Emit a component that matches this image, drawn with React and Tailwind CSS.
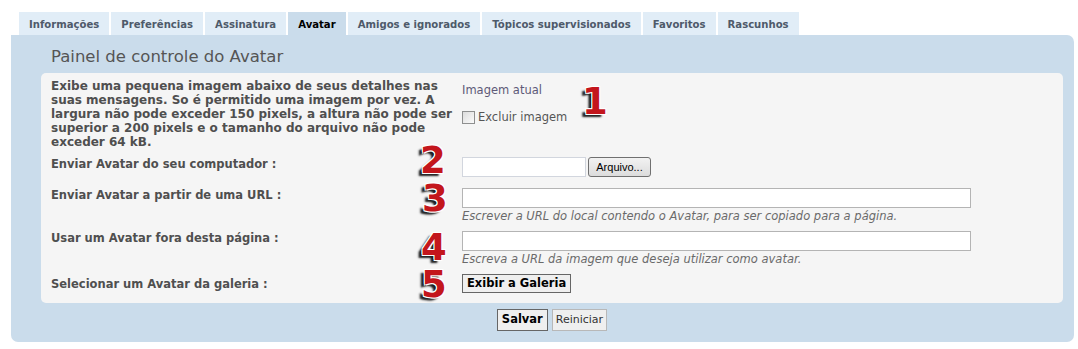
import React from 'react';

const tabs = [
  'Informações',
  'Preferências',
  'Assinatura',
  'Avatar',
  'Amigos e ignorados',
  'Tópicos supervisionados',
  'Favoritos',
  'Rascunhos',
];

const Num = ({ n, className }) => (
  <span
    className={`absolute font-bold text-[37px] leading-none text-[#c3161c] [text-shadow:1px_1px_0_#fff,-1px_-1px_0_#fff,1px_-1px_0_#fff,-1px_1px_0_#fff,-4px_3px_2px_#1e1e1e] ${className}`}
  >
    {n}
  </span>
);

const Label = ({ children }) => (
  <div className="w-[411px] shrink-0 font-bold text-[11.5px] leading-[14px] text-[#4f4f4f]">{children}</div>
);

const TextInput = () => (
  <div className="w-[509px] h-[20px] bg-white border border-[#b4b4b4]" />
);

const Help = ({ children }) => (
  <div className="mt-[1px] italic text-[11.5px] leading-[14px] text-[#6a6a6a]">{children}</div>
);

export default function App() {
  return (
    <div className="min-h-screen bg-white pt-[12px] pl-[11px] pr-[4px] font-['DejaVu_Sans',sans-serif]">
      {/* tabs */}
      <div className="flex gap-[2px] ml-[8px]">
        {tabs.map((t) => (
          <div
            key={t}
            className={`h-[23px] px-[10px] pt-[2px] flex items-center font-bold text-[10.1px] ${
              t === 'Avatar' ? 'bg-[#cadceb] text-black' : 'bg-[#e1edf7] text-[#4e5a6a]'
            }`}
          >
            {t}
          </div>
        ))}
      </div>

      {/* panel */}
      <div className="bg-[#cadceb] rounded-[7px] rounded-tl-none pt-[12px] pb-[11px]">
        <h2 className="pl-[40px] text-[16.5px] leading-[20px] text-[#555]">Painel de controle do Avatar</h2>

        <div className="relative mt-[6px] ml-[30px] mr-[11px] bg-[#f5f5f5] rounded-[5px] pt-[6px] pb-[10px] pl-[10px]">
          {/* row 1 */}
          <div className="flex">
            <div className="w-[411px] shrink-0 font-bold text-[12px] leading-[14px] text-[#4f4f4f]">
              Exibe uma pequena imagem abaixo de seus detalhes nas
              <br />
              suas mensagens. So é permitido uma imagem por vez. A
              <br />
              largura não pode exceder 150 pixels, a altura não pode ser
              <br />
              superior a 200 pixels e o tamanho do arquivo não pode
              <br />
              exceder 64 kB.
            </div>
            <div className="pt-[4px] text-[11.5px] text-[#5e5a78]">
              <div className="leading-[14px]">Imagem atual</div>
              <div className="mt-[12px] flex items-center gap-[3px]">
                <span className="w-[13px] h-[13px] border border-[#8e8f8f] bg-gradient-to-br from-[#dcdcdc] to-[#fbfbfb]" />
                <span className="text-[11.5px] text-[#555]">Excluir imagem</span>
              </div>
            </div>
          </div>

          {/* row 2 */}
          <div className="flex mt-[8px]">
            <Label>Enviar Avatar do seu computador :</Label>
            <div className="flex gap-[2px]">
              <div className="w-[124px] h-[20px] bg-white border border-[#d2d6de]" />
              <button className="h-[20px] w-[63px] rounded-[3px] border border-[#707070] bg-gradient-to-b from-[#f2f2f2] to-[#dcdcdc] font-['Liberation_Sans',sans-serif] text-[11px] text-black">
                Arquivo...
              </button>
            </div>
          </div>

          {/* row 3 */}
          <div className="flex mt-[11px]">
            <Label>Enviar Avatar a partir de uma URL :</Label>
            <div>
              <TextInput />
              <Help>Escrever a URL do local contendo o Avatar, para ser copiado para a página.</Help>
            </div>
          </div>

          {/* row 4 */}
          <div className="flex mt-[8px]">
            <Label>Usar um Avatar fora desta página :</Label>
            <div>
              <TextInput />
              <Help>Escreva a URL da imagem que deseja utilizar como avatar.</Help>
            </div>
          </div>

          {/* row 5 */}
          <div className="flex mt-[8px] items-center">
            <Label>Selecionar um Avatar da galeria :</Label>
            <button className="h-[19px] px-[4px] border border-[#666] bg-[#efefef] font-bold text-[11.5px] leading-none text-black">
              Exibir a Galeria
            </button>
          </div>

          <Num n="1" className="left-[541px] top-[10px]" />
          <Num n="2" className="left-[379px] top-[69px]" />
          <Num n="3" className="left-[381px] top-[107px]" />
          <Num n="4" className="left-[380px] top-[156px]" />
          <Num n="5" className="left-[380px] top-[193px]" />
        </div>

        <div className="ml-[30px] mr-[11px] mt-[6px] flex justify-center gap-[4px]">
          <button className="h-[22px] px-[4px] border border-[#666] bg-[#efefef] font-bold text-[11.5px] text-black">
            Salvar
          </button>
          <button className="h-[22px] px-[3px] border border-[#b8b8b8] bg-[#efefef] text-[11px] text-[#333]">
            Reiniciar
          </button>
        </div>
      </div>
    </div>
  );
}
